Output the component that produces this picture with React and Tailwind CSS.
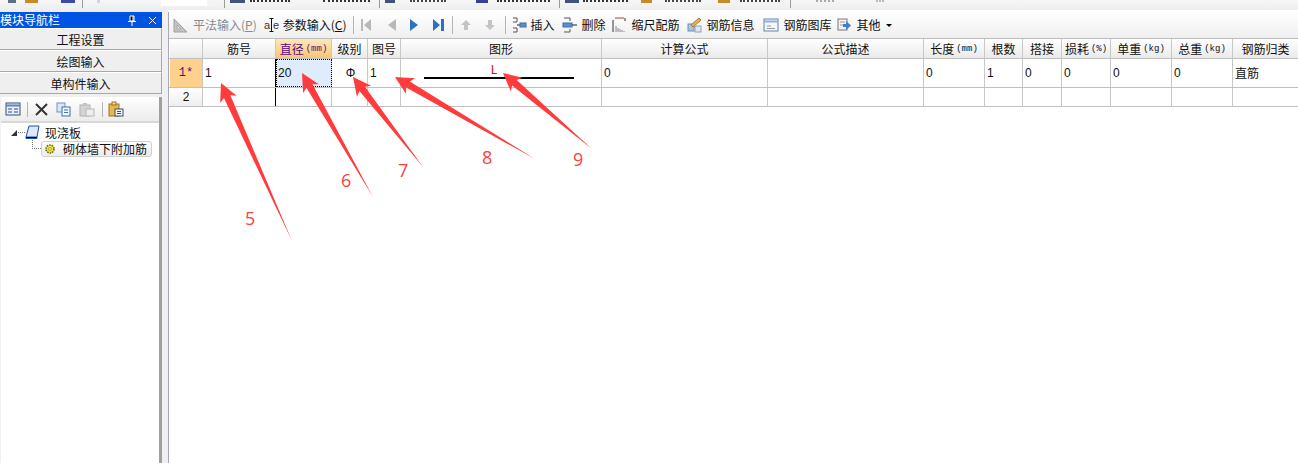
import React from 'react';

const cjk = '[font-family:"Noto_Sans_CJK_SC","Liberation_Sans",sans-serif]';

// bits of the clipped top toolbar: [left, width, colour, kind]
const topBits = [
  [8, 8, '#5a6f8c'], [25, 13, '#c98a2a'], [61, 14, '#3a4aa8'], [82, 1, '#9a9a9a', 'sep'], [97, 3, '#c9d6ee'],
  [161, 46, '#ffffff', 'box'], [207, 11, '#f4f4f4', 'box'], [224, 1, '#9a9a9a', 'sep'],
  [230, 15, '#3f5478'], [250, 40, '#333', 'text'], [323, 47, '#333', 'text'],
  [379, 1, '#9a9a9a', 'sep'], [385, 10, '#3f5478'], [410, 36, '#444', 'text'], [476, 12, '#3a3f98'], [497, 53, '#333', 'text'],
  [559, 1, '#9a9a9a', 'sep'], [565, 14, '#3f5478'], [583, 45, '#333', 'text'], [641, 11, '#c98a2a'], [665, 36, '#444', 'text'],
  [718, 12, '#c98a2a'], [740, 40, '#444', 'text'], [790, 1, '#9a9a9a', 'sep'], [816, 18, '#aaa', 'text'], [876, 8, '#bbb', 'text'],
];

const bitClass = {
  sep: 'h-[8px]',
  box: 'h-[6px]',
  text: 'h-0 border-t-2 border-dotted',
};

const columns = [
  { label: '筋号', w: 'w-[73px]', value: '1' },
  { label: '直径', unit: '(mm)', w: 'w-[56px]', value: '20', active: true },
  { label: '级别', w: 'w-[36px]', value: 'Φ', center: true },
  { label: '图号', w: 'w-[33px]', value: '1' },
  { label: '图形', w: 'w-[201px]', shape: true },
  { label: '计算公式', w: 'w-[166px]', value: '0' },
  { label: '公式描述', w: 'w-[156px]', value: '' },
  { label: '长度', unit: '(mm)', w: 'w-[61px]', value: '0' },
  { label: '根数', w: 'w-[38px]', value: '1' },
  { label: '搭接', w: 'w-[39px]', value: '0' },
  { label: '损耗', unit: '(%)', w: 'w-[49px]', value: '0' },
  { label: '单重', unit: '(kg)', w: 'w-[61px]', value: '0' },
  { label: '总重', unit: '(kg)', w: 'w-[61px]', value: '0' },
  { label: '钢筋归类', w: 'flex-1', value: '直筋', cjkValue: true },
];

// arrow polygon from tip to tail, swept barbs like a screenshot tool's arrow
function arrowPoints([tx, ty], [ex, ey]) {
  const len = Math.hypot(ex - tx, ey - ty);
  const ux = (ex - tx) / len;
  const uy = (ey - ty) / len;
  const p = (along, side) => `${tx + ux * along - uy * side},${ty + uy * along + ux * side}`;
  return [p(0, 0), p(18, 9), p(15, 3.5), `${ex},${ey}`, p(15, -3.5), p(18, -9)].join(' ');
}

const arrows = [
  [[221, 83], [292, 241]],
  [[302, 73], [373, 197]],
  [[353, 77], [423, 167]],
  [[395, 77], [535, 159]],
  [[503, 73], [592, 149]],
];

const marks = [
  ['5', 'left-[245px] top-[207px]'],
  ['6', 'left-[341px] top-[169px]'],
  ['7', 'left-[398px] top-[159px]'],
  ['8', 'left-[482px] top-[146px]'],
  ['9', 'left-[573px] top-[148px]'],
];

function Svg({ w = 16, h = 16, children }) {
  return (
    <svg width={w} height={h} viewBox={`0 0 ${w} ${h}`} className="shrink-0" fill="none">
      {children}
    </svg>
  );
}

const Icons = {
  ruler: (
    <Svg>
      <path d="M1 15V2l13 13z" fill="#c4c4c4" stroke="#a0a0a0" />
      <path d="M4 12V8l4 4z" fill="#f0f0f0" stroke="#a8a8a8" />
    </Svg>
  ),
  param: (
    <svg width="16" height="16" viewBox="0 0 16 16" className="shrink-0">
      <text x="0" y="12" fontSize="11" fontFamily="Liberation Sans" fill="#333">a</text>
      <text x="9" y="12" fontSize="11" fontFamily="Liberation Sans" fill="#333">e</text>
      <path d="M7.5 2v12M5.5 1.5h4M5.5 14.5h4" stroke="#111" />
    </svg>
  ),
  insert: (
    <Svg>
      <path d="M2 1h4v4H2M2 11h4v4H2" stroke="#555" />
      <path d="M6 8h3" stroke="#222" />
      <rect x="9" y="6" width="6" height="4" fill="#5b8fd0" stroke="#3f6ea8" />
    </Svg>
  ),
  remove: (
    <Svg>
      <path d="M2 1h6v3M2 15h6v-3" stroke="#555" />
      <rect x="1" y="6" width="9" height="4" fill="#5b8fd0" stroke="#3f6ea8" />
      <path d="M10 8h5" stroke="#222" />
    </Svg>
  ),
  scale: (
    <Svg w={14}>
      <path d="M1 3v12" stroke="#333" />
      <path d="M3 1h9" stroke="#c33" />
      <path d="M13 1v3" stroke="#333" />
      <path d="M4 9v6M6 11v4M8 12v3M10 13v2M12 14v1" stroke="#888" />
    </Svg>
  ),
  info: (
    <Svg>
      <rect x="1" y="7" width="6" height="7" fill="#a8c4e4" stroke="#6b8fb8" />
      <rect x="8" y="9" width="6" height="6" fill="#dfe8f4" stroke="#8aa2c0" />
      <path d="M4 8l8-7 2 2-8 7z" fill="#e8b64c" stroke="#a8782a" />
    </Svg>
  ),
  lib: (
    <Svg>
      <rect x="1" y="2" width="14" height="12" fill="#f6f6f6" stroke="#5f86b8" />
      <path d="M1 4.5h14" stroke="#8fb0d8" strokeWidth="2" />
      <path d="M4 9h4M4 11.5h8" stroke="#999" />
    </Svg>
  ),
  other: (
    <Svg w={14}>
      <rect x="1" y="2" width="9" height="11" fill="#f4f4f4" stroke="#777" />
      <path d="M3 5h5M3 8h3" stroke="#999" />
      <path d="M6 7h3V4l5 4.5L9 13v-3H6z" fill="#3f7fd0" />
    </Svg>
  ),
};

function Tool({ icon, label, ml, gap = 'gap-[4px]' }) {
  return (
    <div className={`flex items-center ${gap} ${ml} text-[12px] text-[#111]`}>
      {icon}
      <span className="whitespace-nowrap">{label}</span>
    </div>
  );
}

function Sep({ ml }) {
  return <div className={`w-px h-[18px] bg-[#b4b4b4] ${ml}`} />;
}

function Toolbar() {
  return (
    <div className="h-[26px] flex items-center bg-gradient-to-b from-white to-[#efefef] pl-[4px]">
      <div className="flex items-center gap-[4px] text-[12px] text-[#8a8a8a]">
        {Icons.ruler}
        <span className="whitespace-nowrap">平法输入(<span className="underline">P</span>)</span>
      </div>
      <div className="flex items-center gap-[3px] ml-[7px] text-[12px] text-[#111]">
        {Icons.param}
        <span className="whitespace-nowrap">参数输入(<span className="underline">C</span>)</span>
      </div>
      <Sep ml="ml-[6px]" />
      <svg width="11" height="12" viewBox="0 0 11 12" className="ml-[7px]"><path d="M0 0h2v12H0zM10 0v12L3 6z" fill="#b8b8b8" /></svg>
      <svg width="9" height="12" viewBox="0 0 9 12" className="ml-[15px]"><path d="M9 0v12L1 6z" fill="#b8b8b8" /></svg>
      <svg width="9" height="12" viewBox="0 0 9 12" className="ml-[14px]"><path d="M0 0v12l8-6z" fill="#2f6fc4" /></svg>
      <svg width="11" height="12" viewBox="0 0 11 12" className="ml-[14px]"><path d="M0 0v12l7-6zM8 0h3v12H8z" fill="#2f6fc4" /></svg>
      <Sep ml="ml-[8px]" />
      <svg width="10" height="10" viewBox="0 0 10 10" className="ml-[8px]"><path d="M5 0l5 5H7v5H3V5H0z" fill="#c4c4c4" /></svg>
      <svg width="10" height="10" viewBox="0 0 10 10" className="ml-[14px]"><path d="M5 10l5-5H7V0H3v5H0z" fill="#c4c4c4" /></svg>
      <Sep ml="ml-[10px]" />
      <Tool icon={Icons.insert} label="插入" ml="ml-[5px]" />
      <Tool icon={Icons.remove} label="删除" ml="ml-[7px]" />
      <Tool icon={Icons.scale} label="缩尺配筋" ml="ml-[6px]" gap="gap-[6px]" />
      <Tool icon={Icons.info} label="钢筋信息" ml="ml-[7px]" />
      <Tool icon={Icons.lib} label="钢筋图库" ml="ml-[8px]" gap="gap-[5px]" />
      <Tool icon={Icons.other} label="其他" ml="ml-[5px]" gap="gap-[6px]" />
      <div className="ml-[5px] mt-[1px] w-0 h-0 border-x-[3px] border-x-transparent border-t-[3px] border-t-black" />
    </div>
  );
}

function Grid() {
  return (
    <div className="border-t border-[#bdbdbd] text-[12px] text-[#111]">
      {/* header */}
      <div className="flex h-[20px] border-b border-[#c0c0c0]">
        <div className="w-[33px] shrink-0 ml-px border-r border-[#c8c8c8] bg-gradient-to-b from-white to-[#eaeaea]" />
        {columns.map((c) => (
          <div
            key={c.label}
            className={`${c.w} shrink-0 flex items-center justify-center whitespace-nowrap border-r border-[#c8c8c8] ${
              c.active ? 'bg-gradient-to-b from-[#fde8bb] to-[#f7c670] text-[#5b0a7a]' : 'bg-gradient-to-b from-white to-[#eaeaea]'
            } ${c.w === 'flex-1' ? 'flex-1 border-r-0' : ''}`}
          >
            {c.label}
            {c.unit && <span className="text-[9px] ml-[2px] mt-[2px] [font-family:'Liberation_Mono',monospace]">{c.unit}</span>}
          </div>
        ))}
      </div>
      {/* row 1 */}
      <div className="flex h-[29px] border-b border-[#c0c0c0]">
        <div className="w-[33px] shrink-0 ml-px border-r border-[#c8c8c8] bg-[#fdd18c] flex items-center justify-center text-[#5b0a7a] text-[12px] [font-family:'Liberation_Mono',monospace]">
          1*
        </div>
        {columns.map((c, i) => {
          const border = i === 0 ? 'border-r border-black' : 'border-r border-[#c8c8c8]';
          if (c.shape) {
            return (
              <div key={c.label} className={`${c.w} shrink-0 ${border} pl-[23px] flex flex-col justify-start pt-[7px]`}>
                <div className="w-[150px] pr-[10px] text-center text-[12px] leading-[11px] text-[#f00000] [font-family:'Liberation_Mono',monospace]">L</div>
                <div className="w-[150px] h-[2px] bg-black" />
              </div>
            );
          }
          return (
            <div
              key={c.label}
              className={`${c.w} shrink-0 flex items-center pl-[2px] ${c.center ? 'justify-center pl-0' : ''} ${
                c.active ? 'bg-[#deecfc] outline-1 outline-dotted outline-black -outline-offset-1' : ''
              } ${c.w === 'flex-1' ? 'flex-1' : border} ${
                c.cjkValue ? 'text-[12px]' : "text-[12px] [font-family:'Liberation_Sans',sans-serif]"
              }`}
            >
              {c.value}
            </div>
          );
        })}
      </div>
      {/* row 2 */}
      <div className="flex h-[19px] border-b border-[#c0c0c0]">
        <div className="w-[33px] shrink-0 ml-px border-r border-[#c8c8c8] bg-gradient-to-b from-white to-[#eeeeee] flex items-center justify-center text-[12px] [font-family:'Liberation_Sans',sans-serif]">
          2
        </div>
        {columns.map((c, i) => (
          <div
            key={c.label}
            className={`${c.w} shrink-0 ${c.w === 'flex-1' ? 'flex-1' : i === 0 ? 'border-r border-black' : 'border-r border-[#c8c8c8]'}`}
          />
        ))}
      </div>
    </div>
  );
}

function SideTools() {
  return (
    <div className="h-[24px] flex items-center bg-gradient-to-b from-white to-[#ececec] pl-[4px]">
      <Svg>
        <rect x="1" y="2" width="14" height="12" fill="#e6eef8" stroke="#34507c" />
        <path d="M1 4.5h14" stroke="#5f86b8" strokeWidth="2" />
        <path d="M3 8h4M3 11h4M9 8h4M9 11h4" stroke="#34507c" />
      </Svg>
      <div className="w-px h-[15px] bg-[#b4b4b4] ml-[6px]" />
      <svg width="13" height="13" viewBox="0 0 13 13" className="ml-[7px]"><path d="M1 1l11 11M12 1L1 12" stroke="#333" strokeWidth="2" /></svg>
      <svg width="15" height="15" viewBox="0 0 15 15" className="ml-[8px]">
        <rect x="1" y="1" width="8" height="9" fill="#dbe7f6" stroke="#6f93c4" />
        <rect x="6" y="5" width="8" height="9" fill="#f4f8fd" stroke="#3f6ea8" />
        <path d="M8 8h4M8 10.5h4" stroke="#3f6ea8" />
      </svg>
      <svg width="16" height="15" viewBox="0 0 16 15" className="ml-[8px]">
        <rect x="1" y="3" width="10" height="11" fill="#d4d4d4" stroke="#b0b0b0" />
        <rect x="4" y="1" width="4" height="3" fill="#c4c4c4" />
        <rect x="7" y="7" width="8" height="7" fill="#eeeeee" stroke="#b8b8b8" />
      </svg>
      <div className="w-px h-[15px] bg-[#b4b4b4] ml-[7px]" />
      <svg width="16" height="16" viewBox="0 0 16 16" className="ml-[5px]">
        <rect x="1" y="3" width="10" height="12" fill="#e8b850" stroke="#9a7420" />
        <rect x="4" y="1" width="4" height="3" fill="#f3d78a" stroke="#9a7420" />
        <rect x="7" y="8" width="8" height="7" fill="#f4f6fa" stroke="#34507c" />
        <path d="M9 10.5h4M9 12.5h4" stroke="#34507c" />
      </svg>
    </div>
  );
}

function Tree() {
  return (
    <div className="relative flex-1 bg-white pl-[10px] pt-[2px] text-[12px] text-[#111]">
      <div className="flex items-center h-[15px]">
        <div className="w-0 h-0 border-b-[6px] border-b-[#333] border-l-[6px] border-l-transparent" />
        <div className="w-[7px] border-t border-dotted border-[#777] ml-[1px]" />
        <svg width="15" height="15" viewBox="0 0 15 15">
          <path d="M4 1h10l-2 11H1z" fill="#dce9fa" stroke="#1d4fb0" />
          <path d="M1 12l-0 1.5h11L12 12" stroke="#1d4fb0" />
        </svg>
        <span className="ml-[5px]">现浇板</span>
      </div>
      <div className="flex items-start">
        <div className="ml-[21px] w-[9px] h-[9px] border-l border-b border-dotted border-[#777]" />
        <div className="flex items-center w-[111px] h-[16px] mt-[1px] rounded-[3px] border border-[#cfcfcf] bg-gradient-to-b from-white to-[#ececec] pl-[2px]">
          <svg width="12" height="12" viewBox="0 0 12 12">
            <circle cx="6" cy="6" r="4" fill="#f5e61a" stroke="#6a6a10" strokeDasharray="1.5 1" strokeWidth="1.6" />
            <circle cx="6" cy="6" r="1.4" fill="#fff" stroke="#6a6a10" strokeWidth="0.6" />
          </svg>
          <span className="ml-[7px] whitespace-nowrap">砌体墙下附加筋</span>
        </div>
      </div>
    </div>
  );
}

function NavButton({ children }) {
  return (
    <div className="h-[22px] flex items-center justify-center pt-[2px] bg-[#efefef] border border-l-0 border-[#a8a8a8] border-t-white text-[12px] text-[#111]">
      {children}
    </div>
  );
}

export default function App() {
  return (
    <div className={`relative w-[1298px] h-[463px] overflow-hidden bg-white flex flex-col ${cjk}`}>
      {/* clipped main toolbar */}
      <div className="relative h-[12px] shrink-0 bg-gradient-to-b from-[#f6f6f6] to-[#ececec]">
        <div className="flex items-start">
          {topBits.map(([x, w, color, kind], i) => (
            <div
              key={i}
              className={bitClass[kind] || 'h-[3px]'}
              style={{
                width: w,
                marginLeft: x - (i ? topBits[i - 1][0] + topBits[i - 1][1] : 0),
                ...(kind === 'text' ? { borderColor: color } : { background: color }),
              }}
            />
          ))}
        </div>
        <div className="absolute left-[168px] right-0 bottom-0 h-[2px] bg-white" />
      </div>

      <div className="flex flex-1 min-h-0">
        {/* module nav */}
        <aside className="w-[168px] shrink-0 bg-[#f0f0f0] flex">
          <div className="w-[162px] flex flex-col">
            <div className="h-[16px] bg-[#0054e3] flex items-center text-white text-[12px] pr-[5px]">
              <span className="whitespace-nowrap">模块导航栏</span>
              <svg width="10" height="11" viewBox="0 0 10 11" className="ml-auto">
                <path d="M3 1h4v5H3zM1 6.5h8M5 7v4M6 1v5" stroke="#fff" />
              </svg>
              <svg width="9" height="9" viewBox="0 0 9 9" className="ml-[11px]">
                <path d="M1 1l7 7M8 1L1 8" stroke="#fff" />
              </svg>
            </div>
            <NavButton>工程设置</NavButton>
            <NavButton>绘图输入</NavButton>
            <NavButton>单构件输入</NavButton>
            <div className="flex-1 flex flex-col mt-[3px] pl-[1px] border-r-[3px] border-[#a0a0a0] bg-[#f0f0f0]">
              <SideTools />
              <div className="h-[2px] bg-[#d8d8d8]" />
              <Tree />
            </div>
          </div>
        </aside>

        {/* rebar table */}
        <main className="flex-1 min-w-0 border-l border-[#a9a9b5] flex flex-col">
          <Toolbar />
          <Grid />
        </main>
      </div>

      {/* red annotations on top of the screenshot */}
      <svg className="absolute inset-0 pointer-events-none" width="1298" height="463" viewBox="0 0 1298 463">
        {arrows.map(([tip, tail], i) => (
          <polygon key={i} points={arrowPoints(tip, tail)} fill="#ff3b3b" />
        ))}
      </svg>
      {marks.map(([n, pos]) => (
        <span key={n} className={`absolute ${pos} text-[18px] leading-[22px] text-[#ff4040] [font-family:'Open_Sans',sans-serif]`}>
          {n}
        </span>
      ))}
    </div>
  );
}
